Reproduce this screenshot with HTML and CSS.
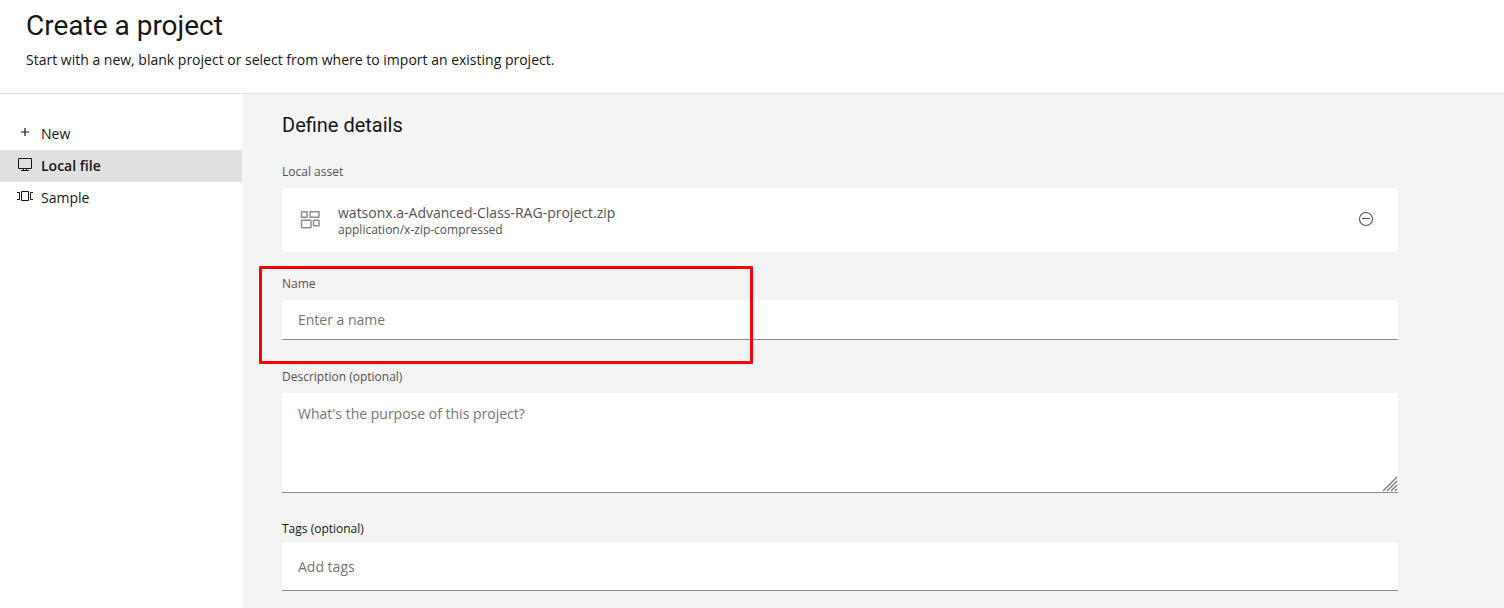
FILE: index.html
```html
<!DOCTYPE html>
<html lang="en">
<head>
<meta charset="utf-8">
<meta name="viewport" content="width=device-width, initial-scale=1">
<title>Create a project</title>
<link rel="stylesheet" href="styles.css">
</head>
<body>
<header class="page-header">
  <h1 class="page-title">Create a project</h1>
  <p class="page-intro">Start with a new, blank project or select from where to import an existing project.</p>
</header>
<div class="layout">
  <nav class="side-nav" aria-label="Project source">
    <a class="side-link" href="#new">
      <svg class="side-icon" viewBox="0 0 16 16" aria-hidden="true"><path d="M8 2v8M4 6h8" fill="none" stroke="currentColor" stroke-width="1.200"/></svg>
      <span>New</span>
    </a>
    <a class="side-link side-link-current" href="#local" aria-current="page">
      <svg class="side-icon" viewBox="0 0 16 16" aria-hidden="true"><path d="M1.500 .5h13v10h-13zM6.500 10.500v2M9.500 10.500v2M4 12.500h8" fill="none" stroke="currentColor"/></svg>
      <span>Local file</span>
    </a>
    <a class="side-link" href="#sample">
      <svg class="side-icon" viewBox="0 0 16 16" aria-hidden="true"><path d="M4.500 1.500h7v9h-7zM0 2.500h2.500v7H0M16 2.500h-2.500v7H16" fill="none" stroke="currentColor"/></svg>
      <span>Sample</span>
    </a>
  </nav>
  <main class="content">
    <h2 class="section-title">Define details</h2>
    <form class="details">
      <section class="field">
        <h3 class="field-label">Local asset</h3>
        <div class="asset">
          <svg class="asset-icon" viewBox="0 0 20 18" aria-hidden="true"><g fill="none" stroke="currentColor" stroke-width="1.500"><rect x="1.500" y=".8" width="5.500" height="5.500" rx=".5"/><rect x="10" y=".8" width="9" height="5.500" rx=".5"/><rect x="1.500" y="9.300" width="9.500" height="7.500" rx=".5"/><rect x="13.500" y="9.300" width="5.500" height="5.500" rx=".5"/></g></svg>
          <div class="asset-text">
            <span class="asset-name">watsonx.a-Advanced-Class-RAG-project.zip</span>
            <span class="asset-type">application/x-zip-compressed</span>
          </div>
          <button class="asset-remove" type="button" aria-label="Remove file">
            <svg class="remove-icon" viewBox="0 0 16 16" aria-hidden="true"><g fill="none" stroke="currentColor" stroke-width="1.100"><circle cx="8" cy="7" r="6.500"/><path d="M4 6.500h8"/></g></svg>
          </button>
        </div>
      </section>
      <div class="field field-name">
        <label class="field-label" for="name">Name</label>
        <input class="text-box" id="name" type="text" placeholder="Enter a name">
        <span class="highlight"></span>
      </div>
      <div class="field field-description">
        <label class="field-label" for="description">Description (optional)</label>
        <div class="area-wrap">
          <textarea class="text-box text-area" id="description" placeholder="What's the purpose of this project?"></textarea>
          <svg class="grip" viewBox="0 0 16 16" aria-hidden="true"><path d="M1 15L15 1M5 15L15 5M9 15l6-6M13 15l2-2" fill="none" stroke="currentColor" stroke-width="1.200"/></svg>
        </div>
      </div>
      <div class="field field-tags">
        <label class="field-label field-label-strong" for="tags">Tags (optional)</label>
        <input class="text-box text-box-tall" id="tags" type="text" placeholder="Add tags">
      </div>
    </form>
  </main>
</div>
</body>
</html>
```
FILE: styles.css
```css
* {
  box-sizing: border-box;
}

body {
  display: flex;
  flex-direction: column;
  min-height: 100vh;
  margin: 0;
  background: #fff;
  color: #161616;
  font: 14px/20px "Open Sans", "Liberation Sans", sans-serif;
}

.page-header {
  padding: 8px 26px 23px;
  border-bottom: 1px solid #e0e0e0;
}

.page-title,
.section-title,
.field-label,
.page-intro {
  margin: 0;
  font-weight: 400;
}

.page-title,
.section-title {
  font-family: Roboto, "Liberation Sans", sans-serif;
}

.page-title {
  font-size: 28px;
  line-height: 36px;
}

.page-intro {
  margin-top: 6px;
}

.layout {
  display: flex;
  flex: 1;
}

.side-nav {
  flex: 0 0 242px;
  padding-top: 24px;
}

.side-link {
  display: flex;
  align-items: center;
  gap: 8px;
  height: 32px;
  padding-left: 17px;
  color: inherit;
  text-decoration: none;
}

.side-link-current {
  background: #e0e0e0;
  font-weight: 600;
}

.side-icon {
  width: 16px;
  height: 16px;
}

.content {
  flex: 1;
  min-width: 0;
  padding: 17px 106px 17px 40px;
  background: #f4f4f4;
}

.section-title {
  font-size: 20px;
  line-height: 28px;
}

.details {
  display: flex;
  flex-direction: column;
  gap: 28px;
  margin-top: 25px;
}

.field {
  display: flex;
  flex-direction: column;
  gap: 8px;
}

.field-name {
  position: relative;
  margin-top: -4px;
}

.field-description {
  margin-top: 1px;
}

.field-tags {
  gap: 6px;
}

.field-label {
  color: #525252;
  font-size: 12px;
  line-height: 16px;
}

.field-label-strong {
  color: #161616;
}

.asset {
  display: flex;
  align-items: center;
  height: 64px;
  padding: 0 16px 0 18px;
  background: #fff;
  color: #525252;
}

.asset-icon {
  width: 20px;
  height: 18px;
  color: #8d8d8d;
}

.asset-text {
  display: flex;
  flex: 1;
  flex-direction: column;
  margin-left: 18px;
  padding-top: 2px;
}

.asset-name {
  line-height: 18px;
}

.asset-type {
  font-size: 12px;
  line-height: 16px;
}

.asset-remove {
  display: grid;
  place-items: center;
  width: 32px;
  height: 32px;
  padding: 0;
  border: 0;
  background: none;
  color: #525252;
}

.remove-icon {
  width: 16px;
  height: 16px;
}

.text-box {
  display: block;
  width: 100%;
  height: 40px;
  padding: 0 16px;
  border: 0;
  border-bottom: 1px solid #8d8d8d;
  border-radius: 0;
  background: #fff;
  color: #161616;
  font: inherit;
}

.text-box::placeholder {
  color: #757575;
  opacity: 1;
}

.text-area {
  height: 100px;
  padding: 11px 16px;
  resize: none;
}

.text-box-tall {
  height: 48px;
}

.area-wrap {
  position: relative;
}

.grip {
  position: absolute;
  right: 0;
  bottom: 1px;
  width: 16px;
  height: 16px;
  color: #757575;
  pointer-events: none;
}

.highlight {
  position: absolute;
  top: -10px;
  left: -23px;
  width: 494px;
  height: 98px;
  border: 3px solid #f00;
  border-radius: 1px;
  pointer-events: none;
}
```
